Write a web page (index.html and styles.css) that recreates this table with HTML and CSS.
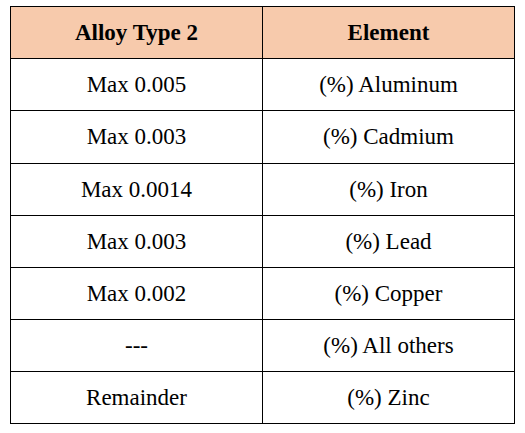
FILE: index.html
```html
<!DOCTYPE html>
<html lang="en">
<head>
  <meta charset="UTF-8">
  <meta name="viewport" content="width=device-width, initial-scale=1.0">
  <title>Alloy Type 2</title>
  <link rel="stylesheet" href="styles.css">
</head>
<body>
  <table class="alloy-table">
    <thead>
      <tr>
        <th>Alloy Type 2</th>
        <th>Element</th>
      </tr>
    </thead>
    <tbody>
      <tr><td>Max 0.005</td><td>(%) Aluminum</td></tr>
      <tr class="tall"><td>Max 0.003</td><td>(%) Cadmium</td></tr>
      <tr><td>Max 0.0014</td><td>(%) Iron</td></tr>
      <tr><td>Max 0.003</td><td>(%) Lead</td></tr>
      <tr><td>Max 0.002</td><td>(%) Copper</td></tr>
      <tr><td>---</td><td>(%) All others</td></tr>
      <tr><td>Remainder</td><td>(%) Zinc</td></tr>
    </tbody>
  </table>
</body>
</html>
```

FILE: styles.css
```css
body {
  font-family: "Liberation Serif", "Times New Roman", serif;
  background-color: #ffffff;
  color: #000000;
  margin: 0;
  padding: 6px 0 0 10px;
}

.alloy-table {
  border-collapse: collapse;
  table-layout: fixed;
  width: 505px;
  font-size: 23px;
}

.alloy-table th,
.alloy-table td {
  border: 1px solid #000000;
  height: 51px;
  padding: 0;
  text-align: center;
  vertical-align: middle;
}

.alloy-table .tall td {
  height: 52px;
}

.alloy-table th {
  background-color: #f7caac;
  font-weight: bold;
}
```
